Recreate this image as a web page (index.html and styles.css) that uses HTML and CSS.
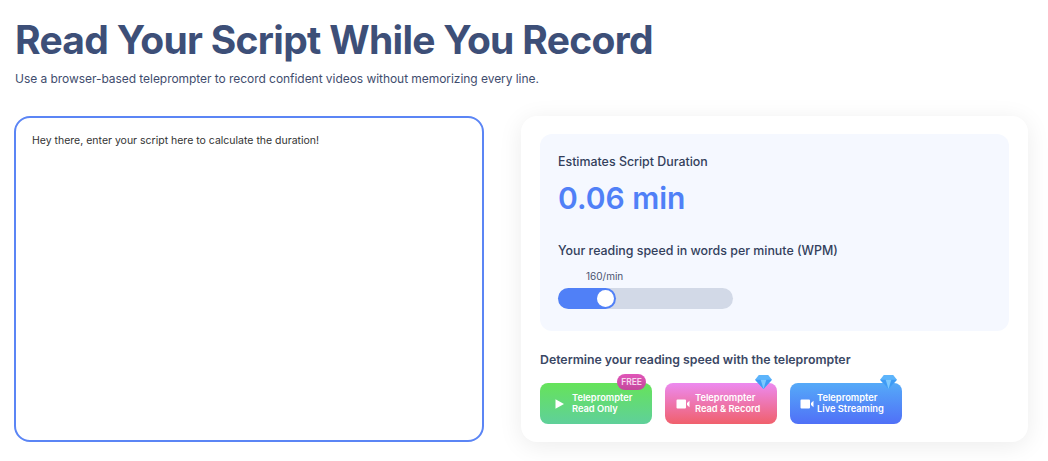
FILE: index.html
```html
<!DOCTYPE html>
<html>
<head>
    <title>Read Your Script While You Record</title>
    <link rel="stylesheet" href="styles.css">
</head>
<body>
    <h1 class="title">Read Your Script While You Record</h1>
    <p class="subtitle">Use a browser-based teleprompter to record confident videos without memorizing every line.</p>

    <div class="columns">
        <div class="script-box">Hey there, enter your script here to calculate the duration!</div>

        <div class="card">
            <div class="estimate">
                <div class="estimate-label">Estimates Script Duration</div>
                <div class="estimate-value">0.06 min</div>
                <div class="speed-label">Your reading speed in words per minute (WPM)</div>
                <div class="speed-value">160/min</div>
                <div class="slider">
                    <div class="slider-fill"><span class="slider-thumb"></span></div>
                </div>
            </div>

            <div class="tools-label">Determine your reading speed with the teleprompter</div>
            <div class="tools">
                <div class="tool tool-green">
                    <span class="badge-free">FREE</span>
                    <svg class="tool-icon" viewBox="0 0 14 14"><path d="M2.500 2.300 11 7l-8.500 4.700z"/></svg>
                    <span class="tool-text">Teleprompter<br>Read Only</span>
                </div>
                <div class="tool tool-pink">
                    <svg class="gem" viewBox="0 0 18 16"><path d="M4 1h10l4 5-9 10L0 6z" fill="#5db4fb"/><path d="M0 6h18L9 16z" fill="#3f9bf5"/><path d="M6 6h6L9 16z" fill="#7cc8ff"/></svg>
                    <svg class="tool-icon" viewBox="0 0 14 14"><path d="M0.500 3.500a1 1 0 0 1 1-1h7.500a1 1 0 0 1 1 1v7a1 1 0 0 1-1 1H1.500a1 1 0 0 1-1-1zM11 6 13.500 3.800v6.400L11 8z"/></svg>
                    <span class="tool-text">Teleprompter<br>Read &amp; Record</span>
                </div>
                <div class="tool tool-blue">
                    <svg class="gem" viewBox="0 0 18 16"><path d="M4 1h10l4 5-9 10L0 6z" fill="#5db4fb"/><path d="M0 6h18L9 16z" fill="#3f9bf5"/><path d="M6 6h6L9 16z" fill="#7cc8ff"/></svg>
                    <svg class="tool-icon" viewBox="0 0 14 14"><path d="M0.500 3.500a1 1 0 0 1 1-1h7.500a1 1 0 0 1 1 1v7a1 1 0 0 1-1 1H1.500a1 1 0 0 1-1-1zM11 6 13.500 3.800v6.400L11 8z"/></svg>
                    <span class="tool-text">Teleprompter<br>Live Streaming</span>
                </div>
            </div>
        </div>
    </div>
</body>
</html>
```

FILE: styles.css
```css
* {
    box-sizing: border-box;
}
body {
    margin: 0;
    padding: 15px 20px 0 14px;
    height: 461px;
    overflow: hidden;
    background: white;
    font-family: Inter, sans-serif;
    color: #3a4a70;
}
.title {
    margin: 0 0 0 1px;
    font-size: 39px;
    line-height: 50px;
    font-weight: 700;
    letter-spacing: -0.7px;
    color: #3d4f78;
}
.subtitle {
    margin: 5px 0 0 1px;
    font-size: 12px;
    line-height: 18px;
    letter-spacing: -0.05px;
    color: #3f4d6e;
}
.columns {
    display: flex;
    justify-content: space-between;
    margin-top: 28px;
}
.script-box {
    width: 470px;
    height: 326px;
    padding: 15px 16px;
    border: 2px solid #5b85f5;
    border-radius: 16px;
    font-size: 10.500px;
    line-height: 16px;
    color: #333;
}
.card {
    width: 507px;
    height: 326px;
    padding: 18px 19px;
    border-radius: 16px;
    background: white;
    box-shadow: 0 4px 24px rgba(0,0,0,0.08);
}
.estimate {
    height: 197px;
    padding: 20px 18px;
    border-radius: 12px;
    background: #f5f8ff;
}
.estimate-label {
    font-size: 12.400px;
    line-height: 16px;
    font-weight: 500;
    color: #333f5c;
}
.estimate-value {
    margin-top: 8px;
    font-size: 30px;
    line-height: 40px;
    font-weight: 600;
    color: #5080f7;
}
.speed-label {
    margin-top: 25px;
    font-size: 12.400px;
    line-height: 16px;
    font-weight: 500;
    color: #333f5c;
}
.speed-value {
    margin: 10px 0 0 28px;
    font-size: 10px;
    line-height: 14px;
    color: #4a5470;
}
.slider {
    width: 175px;
    height: 21px;
    margin-top: 5px;
    border-radius: 11px;
    background: #d2d9e7;
}
.slider-fill {
    display: flex;
    justify-content: flex-end;
    align-items: center;
    width: 58px;
    height: 21px;
    padding-right: 2px;
    border-radius: 11px;
    background: #5080f7;
}
.slider-thumb {
    width: 17px;
    height: 17px;
    border-radius: 50%;
    background: white;
}
.tools-label {
    margin-top: 21px;
    font-size: 12.300px;
    line-height: 16px;
    font-weight: 600;
    color: #3a4764;
}
.tools {
    display: flex;
    gap: 13px;
    margin-top: 15px;
}
.tool {
    position: relative;
    display: flex;
    align-items: center;
    gap: 5px;
    width: 112px;
    height: 41px;
    padding-left: 13px;
    border-radius: 8px;
    font-size: 9.300px;
    line-height: 11px;
    font-weight: 600;
    color: white;
}
.tool-text {
    margin-bottom: 2px;
}
.tool-green {
    background: linear-gradient(#66e35a, #5fd09a);
}
.tool-pink {
    padding-left: 11px;
    background: linear-gradient(#ec8af0, #f0606c);
}
.tool-blue {
    gap: 3px;
    padding-left: 10px;
    background: linear-gradient(#55aaf8, #5070f7);
}
.tool-icon {
    width: 14px;
    height: 14px;
    fill: white;
    flex-shrink: 0;
}
.badge-free {
    position: absolute;
    top: -9px;
    right: 6px;
    padding: 0 4px;
    border-radius: 8px;
    background: linear-gradient(#e055b8, #c4499c);
    font-size: 8.500px;
    line-height: 16px;
    font-weight: 600;
    color: #f6d9ee;
}
.gem {
    position: absolute;
    top: -9px;
    right: 5px;
    width: 17px;
    height: 15px;
}
```
